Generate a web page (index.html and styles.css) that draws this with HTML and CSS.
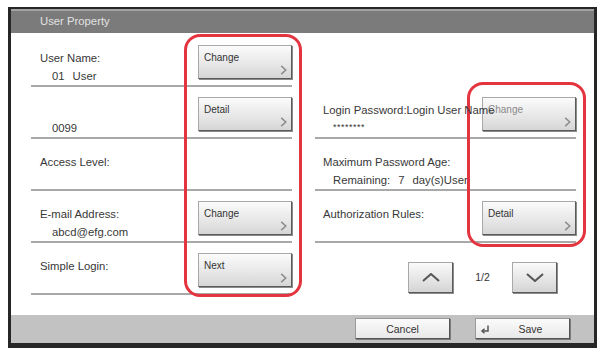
FILE: index.html
```html
<!DOCTYPE html>
<html lang="en">
<head>
<meta charset="utf-8">
<title>User Property</title>
<link rel="stylesheet" href="styles.css">
</head>
<body>
<div class="page">
  <div class="frame">
    <div class="titlebar">User Property</div>
    <div class="content">
      <div class="col col-left">
        <div class="row">
          <div class="info"><div class="label">User Name:</div><div class="value"><span>01</span><span class="sp">User</span></div></div>
          <button class="btn"><span>Change</span><svg class="chev" viewBox="0 0 7 11"><polyline points="1,1 6,5.5 1,10"/></svg></button>
        </div>
        <div class="row">
          <div class="info"><div class="label">&nbsp;</div><div class="value">0099</div></div>
          <button class="btn"><span>Detail</span><svg class="chev" viewBox="0 0 7 11"><polyline points="1,1 6,5.5 1,10"/></svg></button>
        </div>
        <div class="row">
          <div class="info"><div class="label">Access Level:</div></div>
        </div>
        <div class="row">
          <div class="info"><div class="label">E-mail Address:</div><div class="value">abcd@efg.com</div></div>
          <button class="btn"><span>Change</span><svg class="chev" viewBox="0 0 7 11"><polyline points="1,1 6,5.5 1,10"/></svg></button>
        </div>
        <div class="row">
          <div class="info"><div class="label">Simple Login:</div></div>
          <button class="btn"><span>Next</span><svg class="chev" viewBox="0 0 7 11"><polyline points="1,1 6,5.5 1,10"/></svg></button>
        </div>
      </div>
      <div class="col col-right">
        <div class="row plain"></div>
        <div class="row">
          <div class="info over"><div class="label">Login Password:Login User Name</div><div class="value stars">********</div></div>
          <button class="btn"><span class="faint">Change</span><svg class="chev" viewBox="0 0 7 11"><polyline points="1,1 6,5.5 1,10"/></svg></button>
        </div>
        <div class="row">
          <div class="info"><div class="label">Maximum Password Age:</div><div class="value"><span>Remaining:</span><span class="sp">7</span><span class="sp">day(s)User</span></div></div>
        </div>
        <div class="row">
          <div class="info"><div class="label">Authorization Rules:</div></div>
          <button class="btn"><span>Detail</span><svg class="chev" viewBox="0 0 7 11"><polyline points="1,1 6,5.5 1,10"/></svg></button>
        </div>
        <div class="row plain nav">
          <button class="navbtn"><svg viewBox="0 0 18 9"><polyline points="1,8 9,1 17,8"/></svg></button>
          <div class="pageno">1/2</div>
          <button class="navbtn"><svg viewBox="0 0 18 9"><polyline points="1,1 9,8 17,1"/></svg></button>
        </div>
      </div>
    </div>
    <div class="bottombar">
      <button class="fbtn">Cancel</button>
      <button class="fbtn save"><svg class="enter" viewBox="0 0 10 10"><path d="M8 1.5 V7 H2.5"/><path d="M4.5 4.8 L2 7 L4.5 9.2"/></svg><span class="savetxt">Save</span></button>
    </div>
  </div>
  <div class="mark mark-left"></div>
  <div class="mark mark-right"></div>
</div>
</body>
</html>
```

FILE: styles.css
```css
* { box-sizing: border-box; }

body {
  margin: 0;
  background: #ffffff;
  font-family: "Liberation Sans", Arial, sans-serif;
  color: #383838;
}

.page {
  position: relative;
  width: 601px;
  height: 351px;
  padding: 7px 0 0 8px;
}

.frame {
  width: 589px;
  height: 341px;
  border-style: solid;
  border-color: #262626;
  border-width: 2px 3px 5px 3px;
  display: flex;
  flex-direction: column;
  background: #ffffff;
}

.titlebar {
  height: 24px;
  flex: none;
  background: #7b7b7b;
  border-top: 2px solid #a2a2a2;
  color: #e2e2e2;
  font-size: 11.3px;
  line-height: 21px;
  padding-left: 29px;
}

.content {
  height: 282px;
  flex: none;
  display: grid;
  grid-template-columns: 261px 261px;
  column-gap: 23px;
  padding: 2px 18px 0 20px;
}

.row {
  height: 52px;
  display: grid;
  grid-template-columns: minmax(0, 1fr) 94px;
  border-bottom: 2px solid #a9a9a9;
}

.row.plain { border-bottom-color: transparent; }

.info {
  min-width: 0;
  padding: 14px 0 0 9px;
  font-size: 11.3px;
  line-height: 18px;
  white-space: nowrap;
}

.col-right .info { padding-left: 8px; }

.info.over {
  position: relative;
  z-index: 1;
}

.value { padding-left: 12px; }
.col-right .value { padding-left: 10px; }
.value .sp { margin-left: 8px; }
.stars { font-size: 9px; letter-spacing: 0.5px; line-height: 16px; }

.btn {
  align-self: end;
  margin-bottom: 6px;
  height: 34px;
  width: 94px;
  display: flex;
  flex-direction: column;
  align-items: flex-start;
  padding: 5px 4px 3px 5px;
  font: 10px "Liberation Sans", Arial, sans-serif;
  color: #333333;
  background: linear-gradient(#fbfbfb, #e6e6e6 60%, #d6d6d6);
  border: 1px solid #a8a8a8;
  border-right-color: #5a5a5a;
  border-bottom-color: #5a5a5a;
  box-shadow: 1px 1px 0 #8c8c8c;
  line-height: 14px;
}

.btn .faint { color: #8a8a8a; }

.chev {
  align-self: flex-end;
  margin-top: auto;
  width: 7px;
  height: 11px;
}

.chev polyline {
  fill: none;
  stroke: #8a8a8a;
  stroke-width: 1.6;
}

.nav {
  display: flex;
  justify-content: flex-end;
  align-items: flex-end;
  padding-right: 19px;
}

.navbtn {
  width: 45px;
  height: 31px;
  display: flex;
  align-items: center;
  justify-content: center;
  padding: 0;
  background: linear-gradient(#fafafa, #e4e4e4 60%, #d4d4d4);
  border: 1px solid #a8a8a8;
  border-right-color: #5a5a5a;
  border-bottom-color: #5a5a5a;
  box-shadow: 1px 1px 0 #8c8c8c;
}

.navbtn svg { width: 18px; height: 9px; }

.navbtn polyline {
  fill: none;
  stroke: #555555;
  stroke-width: 2;
}

.pageno {
  width: 59px;
  height: 31px;
  line-height: 31px;
  text-align: center;
  font-size: 10.5px;
  color: #333333;
}

.bottombar {
  height: 28px;
  flex: none;
  background: #c2c2c2;
  display: flex;
  justify-content: flex-end;
  align-items: flex-start;
  gap: 25px;
  padding: 3px 24px 0 0;
}

.fbtn {
  width: 95px;
  height: 21px;
  display: flex;
  align-items: center;
  justify-content: center;
  padding: 0;
  font: 10.5px "Liberation Sans", Arial, sans-serif;
  color: #333333;
  background: linear-gradient(#fbfbfb, #e8e8e8);
  border: 1px solid #9a9a9a;
  border-right-color: #555555;
  border-bottom-color: #555555;
  box-shadow: 1px 1px 0 #7a7a7a;
}

.save { justify-content: flex-start; padding-left: 4px; }
.savetxt { flex: 1; text-align: center; padding-left: 2px; }

.enter { width: 10px; height: 10px; }
.enter path {
  fill: none;
  stroke: #555555;
  stroke-width: 1.5;
}

.mark {
  position: absolute;
  border: 3px solid #e3343f;
  border-radius: 16px;
}

.mark-left { left: 184px; top: 34px; width: 118px; height: 263px; }
.mark-right { left: 467px; top: 82px; width: 119px; height: 165px; }
```
